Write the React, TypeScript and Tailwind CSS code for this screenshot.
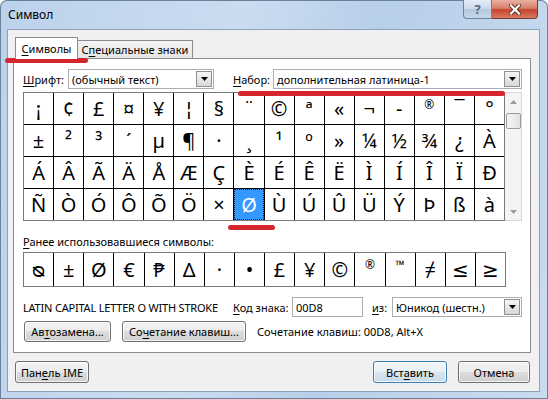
import clsx from "clsx";
import type { ReactNode } from "react";

const UI = "font-['Noto_Sans','DejaVu_Sans',sans-serif]";

const GRID = [
  "¡¢£¤¥¦§¨©ª«¬-®¯°",
  "±²³´µ¶·¸¹º»¼½¾¿À",
  "ÁÂÃÄÅÆÇÈÉÊËÌÍÎÏÐ",
  "ÑÒÓÔÕÖ×ØÙÚÛÜÝÞßà",
];

const RECENT = ["ᴓ", "±", "Ø", "€", "₱", "Δ", "·", "•", "£", "¥", "©", "®", "™", "≠", "≤", "≥"];

// символы, которые в шрифте диалога нарисованы мелко вверху ячейки
const SMALL = ["®", "™"];

function Key({ children }: { children: ReactNode }) {
  return <span className="underline decoration-1 underline-offset-[2px]">{children}</span>;
}

function Arrow() {
  return (
    <svg width="7" height="4" viewBox="0 0 7 4">
      <path d="M0 0h7L3.5 4z" fill="#000" />
    </svg>
  );
}

function Combo({ value, className }: { value: string; className: string }) {
  return (
    <div className={clsx("flex h-[20px] items-center border border-[#abadb3] bg-white", className)}>
      <span className="flex-1 overflow-hidden whitespace-nowrap pl-[3px] text-[11px] leading-[15px] text-black">{value}</span>
      <span className="mr-px flex h-[16px] w-[16px] shrink-0 items-center justify-center border border-[#8e8f8f] bg-[linear-gradient(180deg,#f6f6f6_0%,#e6e6e6_50%,#d8d8d8_100%)]">
        <Arrow />
      </span>
    </div>
  );
}

function Button({
  children,
  className,
  primary,
}: {
  children: ReactNode;
  className: string;
  primary?: boolean;
}) {
  return (
    <button
      className={clsx(
        "flex items-center justify-center whitespace-nowrap rounded-[3px] border text-[11px] leading-[15px] text-black shadow-[inset_0_0_0_1px_rgba(255,255,255,0.75)]",
        primary
          ? "border-[#3c7fb1] bg-[linear-gradient(180deg,#f3f8fb_0%,#e7eff5_50%,#d6e4ef_50%,#c9dbe8_100%)]"
          : "border-[#707070] bg-[linear-gradient(180deg,#f2f2f2_0%,#ebebeb_50%,#dddddd_50%,#cfcfcf_100%)]",
        className
      )}
    >
      {children}
    </button>
  );
}

function Cell({ ch, selected, tall }: { ch: string; selected?: boolean; tall?: boolean }) {
  const small = SMALL.includes(ch);
  return (
    <div
      className={clsx(
        "flex justify-center antialiased",
        ch === "¦" ? "font-['DejaVu_Sans',sans-serif]" : "font-['Noto_Sans','DejaVu_Sans',sans-serif]",
        tall ? "h-[33px]" : "h-[31px]",
        small ? "items-start pt-[3px] text-[12px]" : "items-center text-[20px] leading-none",
        selected ? "border border-dotted border-[#222] bg-[#3399ff] text-white" : "bg-white text-black"
      )}
    >
      {ch}
    </div>
  );
}

function Scrollbar() {
  return (
    <div className="flex h-[129px] w-[17px] flex-col items-center border-y border-r border-[#d9d9d9] bg-[#f4f4f4]">
      <div className="flex h-[17px] w-full items-center justify-center">
        <svg width="7" height="4" viewBox="0 0 7 4">
          <path d="M0 4h7L3.5 0z" fill="#9a9a9a" />
        </svg>
      </div>
      <div className="mt-[3px] h-[16px] w-[15px] rounded-[2px] border border-[#9c9c9c] bg-[linear-gradient(90deg,#f4f4f4,#e2e2e2)]" />
      <div className="flex-1" />
      <div className="flex h-[17px] w-full items-center justify-center">
        <svg width="7" height="4" viewBox="0 0 7 4">
          <path d="M0 0h7L3.5 4z" fill="#9a9a9a" />
        </svg>
      </div>
    </div>
  );
}

export default function App() {
  return (
    <div
      className={clsx(
        "relative flex h-[399px] w-[548px] flex-col overflow-hidden whitespace-nowrap rounded-t-[7px] bg-[linear-gradient(100deg,#bcd2eb_0%,#cbdcf0_40%,#b8cfe9_62%,#c8dbef_100%)] shadow-[inset_0_0_0_1px_#6a819a]",
        UI
      )}
    >
      {/* заголовок окна */}
      <div className="flex h-[29px] shrink-0 items-start justify-between">
        <span className="pl-[8px] pt-[7px] text-[12px] leading-[16px] text-black">Символ</span>
        <div className="mr-[10px] flex">
          <div className="flex h-[19px] w-[29px] items-center justify-center rounded-bl-[4px] border border-t-0 border-[#6d849d] bg-[linear-gradient(180deg,#e4edf6_0%,#c9d9ea_50%,#b3c8de_50%,#c6d7e8_100%)] text-[13px] font-bold leading-none text-[#56677b]">
            ?
          </div>
          <div className="flex h-[19px] w-[46px] items-center justify-center rounded-br-[4px] border border-l-0 border-t-0 border-[#7b3a31] bg-[linear-gradient(180deg,#eab1a3_0%,#d9806c_45%,#c7432d_55%,#d77a63_100%)]">
            <svg width="12" height="11" viewBox="0 0 12 11">
              <path d="M2 1.5l8 8M10 1.5l-8 8" stroke="#5a2a22" strokeWidth="4" strokeLinecap="square" />
              <path d="M2 1.5l8 8M10 1.5l-8 8" stroke="#fff" strokeWidth="2.2" strokeLinecap="square" />
            </svg>
          </div>
        </div>
      </div>

      {/* клиентская область */}
      <div className="ml-[7px] flex h-[363px] w-[533px] flex-col border border-[#8ea3b9] bg-[#f0f0f0] text-[11px]">
        {/* вкладки */}
        <div className="mt-[7px] flex h-[21px] items-start pl-[7px]">
          <div className="relative z-10 flex h-[22px] w-[63px] items-center justify-center border border-b-0 border-[#898c95] bg-white leading-[15px]">
            <span>
              <Key>С</Key>имволы
            </span>
          </div>
          <div className="mt-[3px] flex h-[18px] w-[115px] items-center justify-center border border-b-0 border-l-0 border-[#898c95] bg-[linear-gradient(180deg,#f3f3f3_0%,#e6e6e6_100%)] leading-[15px]">
            <span>
              С<Key>п</Key>ециальные знаки
            </span>
          </div>
        </div>

        {/* содержимое вкладки */}
        <div className="ml-[5px] flex w-[518px] flex-col border border-[#898c95] bg-white pb-[10px] pl-[9px] pt-[10px]">
          <div className="flex h-[20px] items-center leading-[15px]">
            <span className="w-[45px]">
              <Key>Ш</Key>рифт:
            </span>
            <Combo value="(обычный текст)" className="w-[146px]" />
            <span className="ml-[19px] w-[40px]">
              <Key>Н</Key>абор:
            </span>
            <Combo value="дополнительная латиница-1" className="w-[249px]" />
          </div>

          <div className="mt-[3px] flex">
            <div className="grid w-[482px] grid-cols-[repeat(16,minmax(0,1fr))] gap-px border border-[#7a7a7a] bg-black">
              {GRID.flatMap((row, r) =>
                Array.from(row).map((ch, c) => (
                  <Cell key={`${r}-${c}`} ch={ch} selected={r === 3 && c === 7} />
                ))
              )}
            </div>
            <Scrollbar />
          </div>

          <div className="mt-[13px] h-[16px] leading-[16px]">
            <Key>Р</Key>анее использовавшиеся символы:
          </div>

          <div className="mt-[2px] grid w-[483px] grid-cols-[repeat(16,minmax(0,1fr))] gap-px border border-[#7a7a7a] bg-black">
            {RECENT.map((ch, i) => (
              <Cell key={i} ch={ch} tall />
            ))}
          </div>

          <div className="mt-[10px] flex h-[20px] items-center leading-[15px]">
            <span className="w-[210px] tracking-[-0.2px]">LATIN CAPITAL LETTER O WITH STROKE</span>
            <span className="w-[59px]">
              <Key>К</Key>од знака:
            </span>
            <div className="flex h-[20px] w-[71px] items-center border border-[#abadb3] bg-white pl-[3px]">
              00D8
            </div>
            <span className="ml-[9px] w-[20px]">
              <Key>и</Key>з:
            </span>
            <Combo value="Юникод (шестн.)" className="w-[130px]" />
          </div>

          <div className="mt-[4px] flex h-[21px] items-center leading-[15px]">
            <Button className="ml-px h-[21px] w-[87px]">
              Ав<Key>т</Key>озамена...
            </Button>
            <Button className="ml-[11px] h-[21px] w-[124px]">
              Со<Key>ч</Key>етание клавиш...
            </Button>
            <span className="ml-[11px]">Сочетание клавиш: 00D8, Alt+X</span>
          </div>
        </div>

        {/* нижние кнопки */}
        <div className="mt-[8px] flex h-[22px] pl-[7px]">
          <Button className="h-[22px] w-[74px]">
            Пан<Key>е</Key>ль IME
          </Button>
          <div className="flex-1" />
          <Button primary className="h-[22px] w-[74px]">
            Вст<Key>а</Key>вить
          </Button>
          <Button className="ml-[11px] mr-[9px] h-[22px] w-[72px]">Отмена</Button>
        </div>
      </div>

      {/* красные пометки поверх диалога */}
      <div className="absolute left-[5px] top-[58px] h-[5px] w-[83px] rounded-full bg-[#d6262d]" />
      <div className="absolute left-[238px] top-[91px] h-[5px] w-[267px] rounded-full bg-[#d6262d]" />
      <div className="absolute left-[228px] top-[225px] h-[5px] w-[47px] rounded-full bg-[#d6262d]" />
    </div>
  );
}
